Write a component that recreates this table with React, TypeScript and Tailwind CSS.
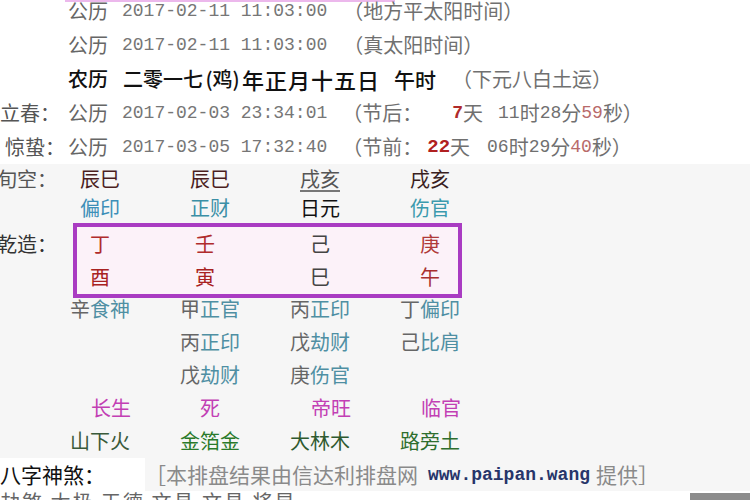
import React from "react";

const MONO = "font-['Liberation_Mono',monospace]";

function Dt({ children }: { children: React.ReactNode }) {
  return <span className={`${MONO} text-[18px] text-[#767676] ml-[14px]`}>{children}</span>;
}

function Cell({ children, className = "" }: { children?: React.ReactNode; className?: string }) {
  return <div className={`w-[110px] shrink-0 text-center ${className}`}>{children}</div>;
}

function Stem({ s, g }: { s: string; g: string }) {
  return (
    <span>
      <span className="text-[#666]">{s}</span>
      <span className="text-[#4f8fa3]">{g}</span>
    </span>
  );
}

export default function App() {
  return (
    <div className="w-[750px] h-[500px] overflow-hidden bg-white text-[20px] leading-none whitespace-nowrap font-['Noto_Sans_CJK_SC','Noto_Sans',sans-serif] text-[#707070]">
      <div className="ml-[65px] h-[2px] w-[330px] bg-[#ecb8ec]" />
      <div className="-mt-[8px]">
        {/* Top rows */}
        <div className="flex items-center h-[34px] pl-[68px]">
          <span className="text-[#666]">公历</span>
          <Dt>2017-02-11 11:03:00</Dt>
          <span className="ml-[16px]">（地方平太阳时间）</span>
        </div>
        <div className="flex items-center h-[34px] pl-[68px]">
          <span className="text-[#666]">公历</span>
          <Dt>2017-02-11 11:03:00</Dt>
          <span className="ml-[16px]">（真太阳时间）</span>
        </div>
        <div className="flex items-center h-[34px] pl-[68px]">
          <span className="text-[#111] font-medium">农历</span>
          <span className="text-[#111] font-medium ml-[15px]">二零一七</span>
          <span className="text-[#111] font-medium w-[39px] text-center">(鸡)</span>
          <span className="text-[#111] font-medium text-[22px] tracking-[1px]">年正月十五日</span>
          <span className="text-[#111] font-medium ml-[14px] text-[21px]">午时</span>
          <span className="ml-[16px]">（下元八白土运）</span>
        </div>
        <div className="flex items-center h-[34px]">
          <span className="w-[68px] text-[#555]">立春：</span>
          <span className="text-[#666]">公历</span>
          <Dt>2017-02-03 23:34:01</Dt>
          <span className="ml-[15px]">（节后：</span>
          <span className={`${MONO} text-[18px] font-bold text-[#b02a2a] ml-[30px]`}>7</span>
          <span>天</span>
          <span className={`${MONO} text-[18px] ml-[15px]`}>11</span>
          <span>时</span>
          <span className={`${MONO} text-[18px]`}>28</span>
          <span>分</span>
          <span className={`${MONO} text-[18px] text-[#b86a6a]`}>59</span>
          <span>秒）</span>
        </div>
        <div className="flex items-center h-[34px]">
          <span className="w-[68px] text-[#555] pl-[5px]">惊蛰：</span>
          <span className="text-[#666]">公历</span>
          <Dt>2017-03-05 17:32:40</Dt>
          <span className="ml-[15px]">（节前：</span>
          <span className={`${MONO} text-[19px] font-bold text-[#b02020] ml-[5px]`}>22</span>
          <span>天</span>
          <span className={`${MONO} text-[18px] ml-[17px]`}>06</span>
          <span>时</span>
          <span className={`${MONO} text-[18px]`}>29</span>
          <span>分</span>
          <span className={`${MONO} text-[18px] text-[#b86a6a]`}>40</span>
          <span>秒）</span>
        </div>

        {/* Chart section */}
        <div className="bg-[#f6f6f6]">
          <div className="flex items-center h-[29px]">
            <div className="w-[48px] -ml-[3px] shrink-0 text-[#555]">旬空：</div>
            <Cell className="text-[#4b1e1e]">辰巳</Cell>
            <Cell className="text-[#4b1e1e]">辰巳</Cell>
            <Cell>
              <span className="text-[#555] underline underline-offset-[3px] decoration-[#777]">戌亥</span>
            </Cell>
            <Cell className="text-[#3a1f1f]">戌亥</Cell>
          </div>
          <div className="flex items-center h-[30px] pl-[45px]">
            <Cell className="text-[#3d8fb8]">偏印</Cell>
            <Cell className="text-[#3b8fa6]">正财</Cell>
            <Cell className="text-[#111]">日元</Cell>
            <Cell className="text-[#3b9aae]">伤官</Cell>
          </div>

          <div className="flex items-start">
            <div className="w-[76px] -ml-[3px] shrink-0 mt-[4px] h-[33px] flex items-center text-[#333]">乾造：</div>
            <div className="relative z-10 w-[389px] shrink-0 border-4 border-[#a93cc2] bg-[#fcf2f9]">
              <div className="flex items-center h-[33px] -ml-[32px]">
                <Cell className="text-[#b02c2c]">丁</Cell>
                <Cell className="text-[#b02c2c] pr-[10px]">壬</Cell>
                <Cell className="text-[#444]">己</Cell>
                <Cell className="text-[#b03a3a]">庚</Cell>
              </div>
              <div className="flex items-center h-[34px] -ml-[32px]">
                <Cell className="text-[#a82222]">酉</Cell>
                <Cell className="text-[#a82222] pr-[10px]">寅</Cell>
                <Cell className="text-[#444]">巳</Cell>
                <Cell className="text-[#a83030]">午</Cell>
              </div>
            </div>
          </div>

          <div className="flex items-center h-[32px] -mt-[5px] pl-[45px]">
            <Cell><Stem s="辛" g="食神" /></Cell>
            <Cell><Stem s="甲" g="正官" /></Cell>
            <Cell><Stem s="丙" g="正印" /></Cell>
            <Cell><Stem s="丁" g="偏印" /></Cell>
          </div>
          <div className="flex items-center h-[33px] pl-[45px]">
            <Cell />
            <Cell><Stem s="丙" g="正印" /></Cell>
            <Cell><Stem s="戊" g="劫财" /></Cell>
            <Cell><Stem s="己" g="比肩" /></Cell>
          </div>
          <div className="flex items-center h-[33px] pl-[45px]">
            <Cell />
            <Cell><Stem s="戊" g="劫财" /></Cell>
            <Cell><Stem s="庚" g="伤官" /></Cell>
            <Cell />
          </div>
          <div className="flex items-center h-[33px] pl-[45px] text-[#c23fb4]">
            <Cell className="pl-[22px]">长生</Cell>
            <Cell>死</Cell>
            <Cell className="pl-[22px]">帝旺</Cell>
            <Cell className="pl-[22px]">临官</Cell>
          </div>
          <div className="flex items-center h-[34px] pl-[45px]">
            <Cell className="text-[#3a5a3a]">山下火</Cell>
            <Cell className="text-[#2a7a2a]">金箔金</Cell>
            <Cell className="text-[#2f5a2f]">大林木</Cell>
            <Cell className="text-[#2e6e2e]">路旁土</Cell>
          </div>
          <div className="flex items-center h-[33px] text-[21px]">
            <div className="w-[145px] h-full flex items-center bg-white text-[#111] shrink-0">八字神煞：</div>
            <span className="text-[#8a8a8a]">［本排盘结果由信达利排盘网</span>
            <span className={`${MONO} text-[18px] font-bold text-[#27356a] ml-[10px]`}>www.paipan.wang</span>
            <span className="text-[#8a8a8a] ml-[6px]">提供］</span>
          </div>
          <div className="flex items-start h-[33px] bg-white">
            <span className="mt-[1px] leading-[20px] text-[#666] tracking-[2px]">劫煞 太极 天德 文昌 文昌 将星</span>
            <div className="ml-auto mt-[2px] w-[60px] h-[8px] bg-[#8c8c8c]" />
          </div>
        </div>
      </div>
    </div>
  );
}
